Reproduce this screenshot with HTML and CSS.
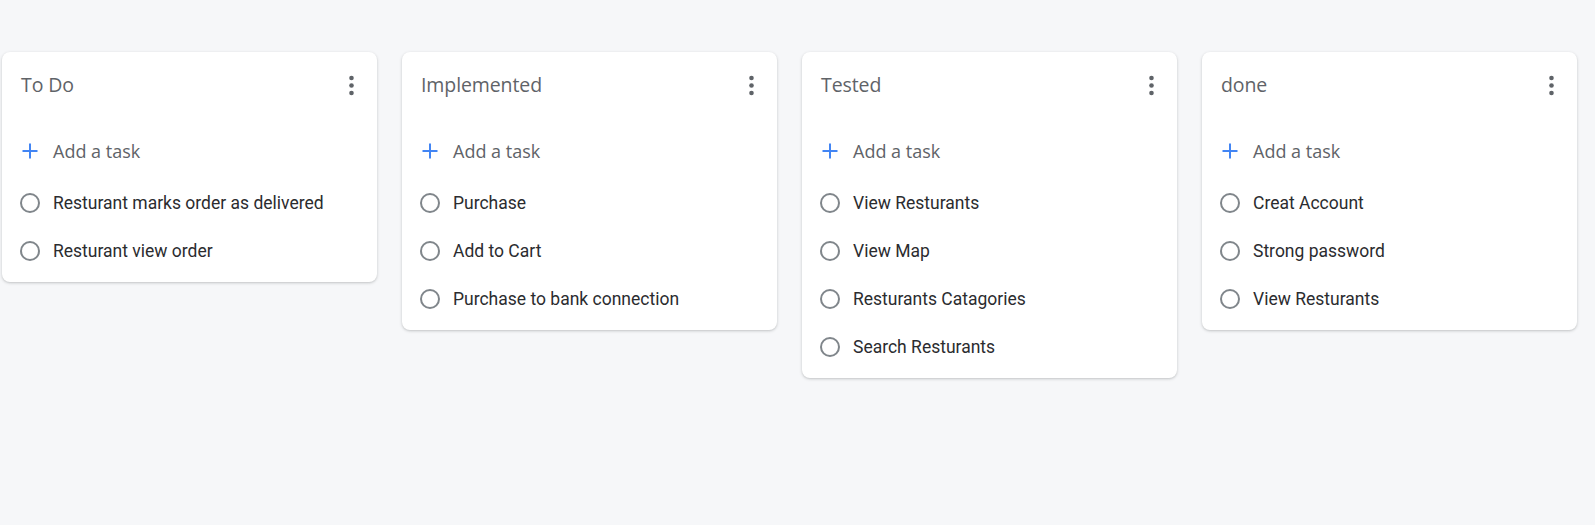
FILE: index.html
```html
<!DOCTYPE html>
<html>
<head>
<meta charset="utf-8">
<title>Tasks board</title>
<link rel="stylesheet" href="styles.css">
</head>
<body>
<main class="board">
  <section class="list">
    <header class="list-head">
      <h2 class="list-title">To Do</h2>
      <button class="kebab" aria-label="More"><svg viewBox="0 0 25 25" width="25" height="25"><circle cx="12.5" cy="5" r="2.3"/><circle cx="12.5" cy="12.5" r="2.3"/><circle cx="12.5" cy="20" r="2.3"/></svg></button>
    </header>
    <div class="add-row"><span class="icon"><svg viewBox="0 0 16 16" width="16" height="16"><path d="M8 0.5v15M0.5 8h15"/></svg></span><span class="add-label">Add a task</span></div>
    <ul class="tasks">
      <li class="task"><span class="icon"><span class="check"></span></span><span class="task-label">Resturant marks order as delivered</span></li>
      <li class="task"><span class="icon"><span class="check"></span></span><span class="task-label">Resturant view order</span></li>
    </ul>
  </section>
  <section class="list">
    <header class="list-head">
      <h2 class="list-title">Implemented</h2>
      <button class="kebab" aria-label="More"><svg viewBox="0 0 25 25" width="25" height="25"><circle cx="12.5" cy="5" r="2.3"/><circle cx="12.5" cy="12.5" r="2.3"/><circle cx="12.5" cy="20" r="2.3"/></svg></button>
    </header>
    <div class="add-row"><span class="icon"><svg viewBox="0 0 16 16" width="16" height="16"><path d="M8 0.5v15M0.5 8h15"/></svg></span><span class="add-label">Add a task</span></div>
    <ul class="tasks">
      <li class="task"><span class="icon"><span class="check"></span></span><span class="task-label">Purchase</span></li>
      <li class="task"><span class="icon"><span class="check"></span></span><span class="task-label">Add to Cart</span></li>
      <li class="task"><span class="icon"><span class="check"></span></span><span class="task-label">Purchase to bank connection</span></li>
    </ul>
  </section>
  <section class="list">
    <header class="list-head">
      <h2 class="list-title">Tested</h2>
      <button class="kebab" aria-label="More"><svg viewBox="0 0 25 25" width="25" height="25"><circle cx="12.5" cy="5" r="2.3"/><circle cx="12.5" cy="12.5" r="2.3"/><circle cx="12.5" cy="20" r="2.3"/></svg></button>
    </header>
    <div class="add-row"><span class="icon"><svg viewBox="0 0 16 16" width="16" height="16"><path d="M8 0.5v15M0.5 8h15"/></svg></span><span class="add-label">Add a task</span></div>
    <ul class="tasks">
      <li class="task"><span class="icon"><span class="check"></span></span><span class="task-label">View Resturants</span></li>
      <li class="task"><span class="icon"><span class="check"></span></span><span class="task-label">View Map</span></li>
      <li class="task"><span class="icon"><span class="check"></span></span><span class="task-label">Resturants Catagories</span></li>
      <li class="task"><span class="icon"><span class="check"></span></span><span class="task-label">Search Resturants</span></li>
    </ul>
  </section>
  <section class="list">
    <header class="list-head">
      <h2 class="list-title">done</h2>
      <button class="kebab" aria-label="More"><svg viewBox="0 0 25 25" width="25" height="25"><circle cx="12.5" cy="5" r="2.3"/><circle cx="12.5" cy="12.5" r="2.3"/><circle cx="12.5" cy="20" r="2.3"/></svg></button>
    </header>
    <div class="add-row"><span class="icon"><svg viewBox="0 0 16 16" width="16" height="16"><path d="M8 0.5v15M0.5 8h15"/></svg></span><span class="add-label">Add a task</span></div>
    <ul class="tasks">
      <li class="task"><span class="icon"><span class="check"></span></span><span class="task-label">Creat Account</span></li>
      <li class="task"><span class="icon"><span class="check"></span></span><span class="task-label">Strong password</span></li>
      <li class="task"><span class="icon"><span class="check"></span></span><span class="task-label">View Resturants</span></li>
    </ul>
  </section>
</main>
</body>
</html>
```
FILE: styles.css
```css
html, body {
  margin: 0;
  padding: 0;
  background: #f6f7f9;
  height: 100%;
}
body {
  font-family: Roboto, "Liberation Sans", sans-serif;
  color: #202124;
}
.board {
  display: flex;
  align-items: flex-start;
  gap: 25px;
  padding: 52px 0 0 2px;
}
.list {
  width: 375px;
  flex: 0 0 375px;
  background: #fff;
  border-radius: 8px;
  box-shadow: 0 1px 2px rgba(60, 64, 67, 0.18), 0 1px 3px 1px rgba(60, 64, 67, 0.08);
  padding-bottom: 7px;
  box-sizing: border-box;
}
.list-head {
  height: 67px;
  display: flex;
  align-items: center;
  justify-content: space-between;
  padding: 0 13px 0 19px;
}
.list-title {
  margin: 0 0 2px;
  font-family: "Open Sans", Roboto, sans-serif;
  font-weight: 400;
  font-size: 19.5px;
  color: #5f6368;
  letter-spacing: -0.1px;
}
.kebab {
  border: 0;
  background: none;
  padding: 0;
  width: 25px;
  height: 25px;
  display: flex;
  fill: #5f6368;
}
.add-row {
  margin-top: 8px;
  margin-bottom: 4px;
  height: 48px;
  display: flex;
  align-items: center;
  padding-left: 15px;
  gap: 11px;
}
.icon {
  width: 25px;
  height: 25px;
  display: flex;
  align-items: center;
  justify-content: center;
  flex: 0 0 25px;
}
.add-row svg path {
  stroke: #4285f4;
  stroke-width: 2;
  fill: none;
}
.add-label {
  font-family: "Open Sans", Roboto, sans-serif;
  font-size: 18px;
  color: #5f6368;
}
.tasks {
  list-style: none;
  margin: 0;
  padding: 0;
}
.task {
  height: 48px;
  display: flex;
  align-items: center;
  padding-left: 15px;
  gap: 11px;
}
.check {
  width: 20px;
  height: 20px;
  border: 2px solid #80868b;
  border-radius: 50%;
  box-sizing: border-box;
}
.task-label {
  font-size: 17.5px;
  color: #2b2c2f;
  margin-bottom: 1px;
}
```
